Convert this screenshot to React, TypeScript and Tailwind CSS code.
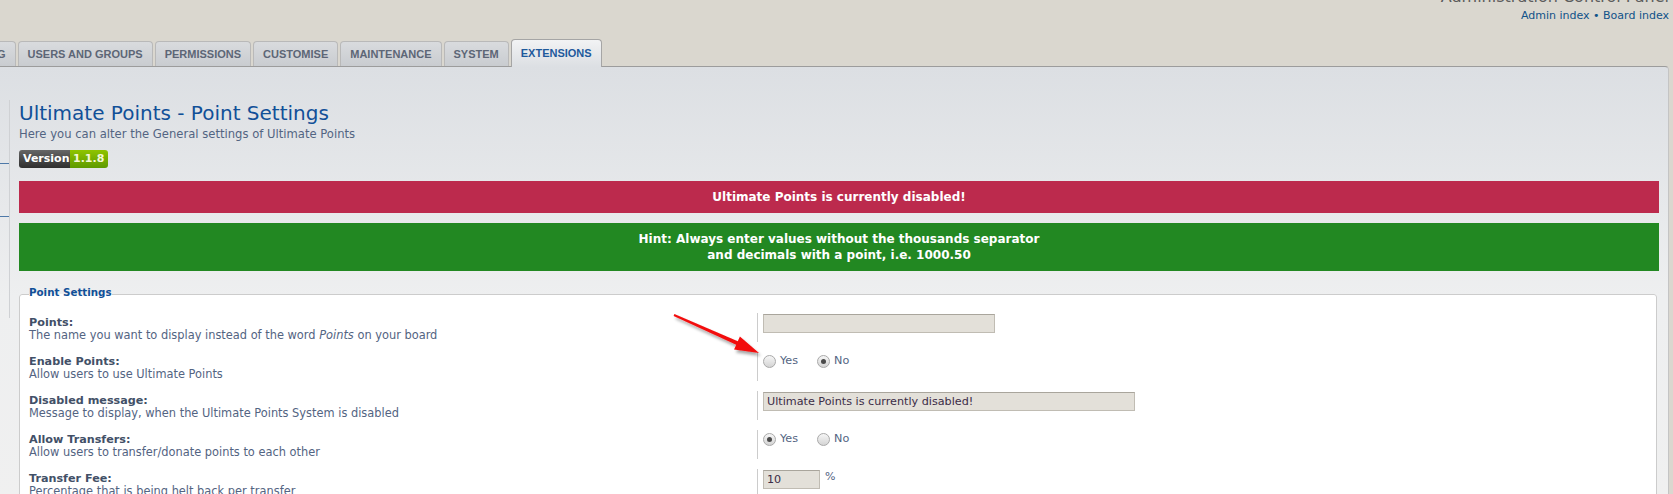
import React from "react";

const tabs = [
  "POSTING",
  "USERS AND GROUPS",
  "PERMISSIONS",
  "CUSTOMISE",
  "MAINTENANCE",
  "SYSTEM",
  "EXTENSIONS",
];

function Radio({ checked }: { checked?: boolean }) {
  return (
    <span className="flex h-[13px] w-[13px] items-center justify-center rounded-full border border-[#a9a9a9] bg-gradient-to-b from-[#f6f6f6] to-[#d4d4d4]">
      {checked && <span className="h-[5px] w-[5px] rounded-full bg-[#4a4a4a]" />}
    </span>
  );
}

function YesNo({ yes }: { yes: boolean }) {
  return (
    <div className="-mt-[1px] flex h-[19px] items-center text-[11.2px] text-[#536482]">
      <Radio checked={yes} />
      <span className="ml-[4px] mr-[19px]">Yes</span>
      <Radio checked={!yes} />
      <span className="ml-[4px]">No</span>
    </div>
  );
}

function Row({
  label,
  desc,
  children,
}: {
  label: string;
  desc: React.ReactNode;
  children: React.ReactNode;
}) {
  return (
    <dl className="mb-[10px] flex">
      <dt className="w-[737px] pl-[9px] pt-[3px] leading-[13px]">
        <div className="text-[11.2px] font-bold text-[#425067]">{label}</div>
        <div className="text-[11.4px] text-[#536482]">{desc}</div>
      </dt>
      <dd className="min-h-[29px] flex-1 border-l border-[#cccccc] pl-[5px] pt-[1px]">
        {children}
      </dd>
    </dl>
  );
}

function TextBox({ w, value }: { w: string; value?: string }) {
  return (
    <div
      className={`h-[19px] ${w} border border-[#c0bcb3] border-t-[#a9a59c] bg-[#e3e0d9] px-[3px] text-[11.2px] leading-[17px] text-[#3b2c47]`}
    >
      {value}
    </div>
  );
}

export default function App() {
  return (
    <div className="relative h-[494px] w-[1673px] overflow-hidden bg-[#dad7cf] font-['DejaVu_Sans',sans-serif]">
      {/* header */}
      <div className="flex h-[40px] flex-col items-end pr-[4px]">
        <div className="-mt-[13px] text-[16px] leading-[20px] text-[#5c5c5c]">
          Administration Control Panel
        </div>
        <div className="mt-[2px] text-[11px] leading-[14px] text-[#105289]">
          <a>Admin index</a> • <a>Board index</a>
        </div>
      </div>

      {/* tabs */}
      <div className="-ml-[54px] flex h-[26px] items-end gap-[2px] font-['Liberation_Sans',Arial,sans-serif] text-[11px] font-bold">
        {tabs.map((t) =>
          t === "EXTENSIONS" ? (
            <div
              key={t}
              className="relative z-10 -mb-[1px] flex h-[28px] items-center rounded-t-[4px] border border-b-0 border-[#a5a5a5] bg-gradient-to-b from-[#f2f3f4] to-[#dcdfe3] px-[9px] text-[#1e5a9c]"
            >
              {t}
            </div>
          ) : (
            <div
              key={t}
              className="flex h-[25px] items-center rounded-t-[4px] border border-b-0 border-[#b9b9b9] bg-gradient-to-b from-[#d9dbde] to-[#c9ccd0] px-[9px] text-[#5d6676]"
            >
              {t}
            </div>
          )
        )}
      </div>

      {/* panel */}
      <div className="mr-[4px] flex h-[440px] rounded-tr-[4px] border-r border-t border-[#9c9c9c] border-r-[#c4c4c4] bg-[linear-gradient(to_bottom,#dcdfe3_0px,#eeeff0_230px,#f0f0f0_100%)]">
        {/* menu edge */}
        <div className="w-[10px] shrink-0">
          <div className="mt-[33px] h-[218px] border-r border-[#cfd1d4]">
            <div className="h-[64px] border-b border-[#4e79a8]" />
            <div className="h-[53px] border-b border-[#4e79a8]" />
          </div>
        </div>

        {/* main */}
        <div className="flex-1 pl-[9px] pr-[9px] pt-[34px]">
          <h1 className="text-[20px] leading-[24px] text-[#115098]">
            Ultimate Points - Point Settings
          </h1>
          <p className="mt-[2px] text-[11.6px] leading-[14px] text-[#536482]">
            Here you can alter the General settings of Ultimate Points
          </p>

          <div className="mt-[9px] flex h-[18px] w-max overflow-hidden rounded-[3px] text-[11px] font-bold leading-[18px]">
            <span className="w-[51px] bg-gradient-to-b from-[#666666] to-[#2f2f2f] pl-[4px] text-white">
              Version
            </span>
            <span className="w-[38px] bg-gradient-to-b from-[#8fc400] to-[#5e9a00] pl-[3px] text-[#f4f7d8]">
              1.1.8
            </span>
          </div>

          <div className="mt-[13px] bg-[#bc2a4d] py-[8px] text-center text-[12px] font-bold leading-[16px] text-white">
            Ultimate Points is currently disabled!
          </div>

          <div className="mt-[10px] bg-[#228822] py-[8px] text-center text-[12px] font-bold leading-[16px] text-white">
            <strong>Hint:</strong> Always enter values without the thousands separator
            <br />
            and decimals with a point, i.e. 1000.50
          </div>

          <fieldset className="mt-[14px] mr-[2px] rounded-[3px] border border-[#cccccc] bg-white pt-[10px]">
            <legend className="ml-[9px] pb-[4px] text-[10.3px] font-bold leading-[14px] text-[#115098]">
              Point Settings
            </legend>

            <Row
              label="Points:"
              desc={
                <>
                  The name you want to display instead of the word <em>Points</em> on your board
                </>
              }
            >
              <TextBox w="w-[232px]" />
            </Row>

            <Row label="Enable Points:" desc="Allow users to use Ultimate Points">
              <YesNo yes={false} />
            </Row>

            <Row
              label="Disabled message:"
              desc="Message to display, when the Ultimate Points System is disabled"
            >
              <TextBox w="w-[372px]" value="Ultimate Points is currently disabled!" />
            </Row>

            <Row
              label="Allow Transfers:"
              desc="Allow users to transfer/donate points to each other"
            >
              <YesNo yes={true} />
            </Row>

            <Row label="Transfer Fee:" desc="Percentage that is being helt back per transfer">
              <div className="flex items-start">
                <TextBox w="w-[57px]" value="10" />
                <span className="ml-[5px] text-[11px] leading-[14px] text-[#536482]">%</span>
              </div>
            </Row>
          </fieldset>
        </div>
      </div>

      {/* annotation arrow */}
      <svg
        className="absolute left-[660px] top-[305px]"
        width="110"
        height="60"
        viewBox="0 0 110 60"
      >
        <defs>
          <filter id="sh" x="-20%" y="-20%" width="140%" height="160%">
            <feDropShadow dx="2" dy="3" stdDeviation="1.5" floodColor="#000" floodOpacity="0.35" />
          </filter>
        </defs>
        <polygon
          points="14.4,9.1 77.8,36.2 79.9,31.6 99,48 74.1,44.4 76.2,39.8 13.6,10.9"
          fill="#f20d0d"
          filter="url(#sh)"
        />
      </svg>
    </div>
  );
}
